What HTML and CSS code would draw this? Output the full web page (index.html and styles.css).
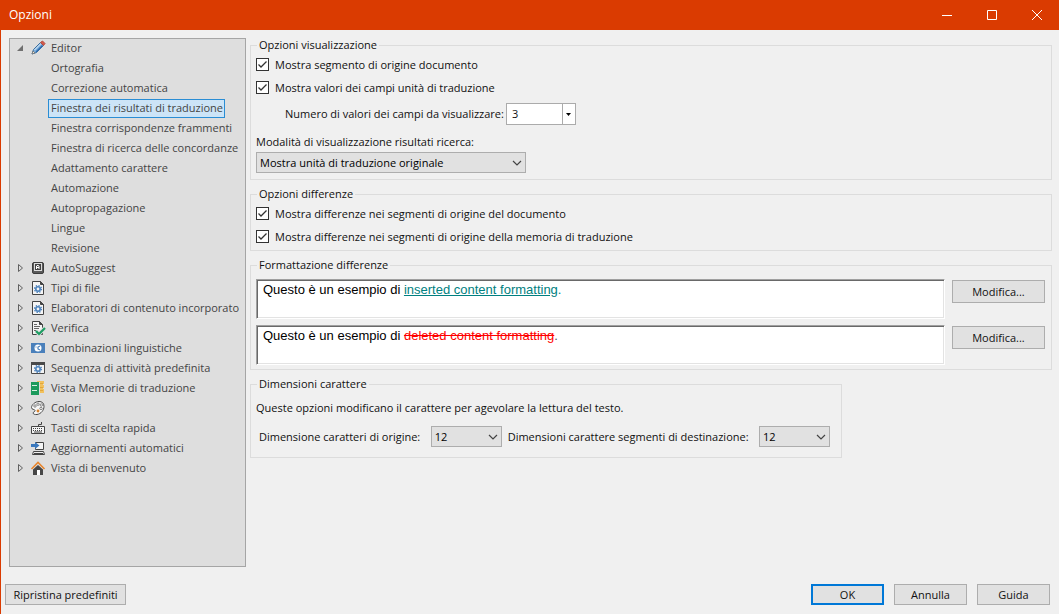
FILE: index.html
```
<!DOCTYPE html>
<html lang="it">
<head>
<meta charset="utf-8">
<title>Opzioni</title>
<link rel="stylesheet" href="styles.css">
</head>
<body>
<div class="window">
  <header class="titlebar">
    <h1 class="title">Opzioni</h1>
    <div class="window-controls">
      <button type="button" class="caption-button" aria-label="Riduci a icona"><svg width="12" height="12" viewBox="0 0 12 12"><path d="M1 6.500h10"/></svg></button>
      <button type="button" class="caption-button" aria-label="Ingrandisci"><svg width="12" height="12" viewBox="0 0 12 12"><path d="M1.500 1.500h9v9h-9z"/></svg></button>
      <button type="button" class="caption-button" aria-label="Chiudi"><svg width="12" height="12" viewBox="0 0 12 12"><path d="M1 1l10 10M11 1L1 11"/></svg></button>
    </div>
  </header>

  <div class="body">
    <nav class="tree" aria-label="Categorie">
      <ul class="tree-list">
        <li>
          <div class="node">
            <svg class="arrow" viewBox="0 0 8 8"><path fill="#707070" d="M7 1v6H1z"/></svg>
            <svg class="icon" viewBox="0 0 16 16"><path d="M2 14l1.500-4.500 7-7 3 3-7 7z" fill="#7fb0dc" stroke="#3d6f9f"/><path d="M4.500 10l6.500-6.500" stroke="#e4f1fb"/><path d="M6 12l6.500-6.500" stroke="#2f6cb0" stroke-width="1.500"/><path d="M2 14l1-3 2 2z" fill="#f0e3d2" stroke="#555" stroke-width=".5"/><path d="M10.500 2.500l2-1.500 2.500 2.500-1.500 2z" fill="#d3594b" stroke="#b34a40"/></svg>
            <a class="label" href="#editor">Editor</a>
          </div>
          <ul class="tree-list children">
            <li class="node"><a class="label" href="#ortografia">Ortografia</a></li>
            <li class="node"><a class="label" href="#correzione">Correzione automatica</a></li>
            <li class="node"><a class="label selected" aria-current="page" href="#risultati">Finestra dei risultati di traduzione</a></li>
            <li class="node"><a class="label" href="#frammenti">Finestra corrispondenze frammenti</a></li>
            <li class="node"><a class="label" href="#concordanze">Finestra di ricerca delle concordanze</a></li>
            <li class="node"><a class="label" href="#adattamento">Adattamento carattere</a></li>
            <li class="node"><a class="label" href="#automazione">Automazione</a></li>
            <li class="node"><a class="label" href="#autopropagazione">Autopropagazione</a></li>
            <li class="node"><a class="label" href="#lingue">Lingue</a></li>
            <li class="node"><a class="label" href="#revisione">Revisione</a></li>
          </ul>
        </li>
        <li class="node">
          <svg class="arrow" viewBox="0 0 8 8"><use href="#collapsed"/></svg>
          <svg class="icon" viewBox="0 0 16 16"><rect x="2.500" y="2.500" width="11" height="11" rx="1.500" fill="#5a5a5a" stroke="#3c3c3c"/><rect x="4.500" y="3.500" width="7" height="7" fill="#444" stroke="#ddd"/><path d="M6.500 9V6l.5-.5h1.500l.5.500v3M6.500 7.500H9" fill="none" stroke="#fff"/></svg>
          <a class="label" href="#autosuggest">AutoSuggest</a>
        </li>
        <li class="node">
          <svg class="arrow" viewBox="0 0 8 8"><use href="#collapsed"/></svg>
          <svg class="icon" viewBox="0 0 16 16"><use href="#file-gear"/></svg>
          <a class="label" href="#tipi">Tipi di file</a>
        </li>
        <li class="node">
          <svg class="arrow" viewBox="0 0 8 8"><use href="#collapsed"/></svg>
          <svg class="icon" viewBox="0 0 16 16"><use href="#file-gear"/></svg>
          <a class="label" href="#elaboratori">Elaboratori di contenuto incorporato</a>
        </li>
        <li class="node">
          <svg class="arrow" viewBox="0 0 8 8"><use href="#collapsed"/></svg>
          <svg class="icon" viewBox="0 0 16 16"><path d="M2.500 1.500h7l3 3v10h-10z" fill="#f4f4f4" stroke="#444"/><path d="M9.500 1.500v3h3z" fill="#444" stroke="#444"/><path d="M4 4.500h3M4 6.500h6M4 8.500h5M4 10.500h2" stroke="#666"/><path d="M6 11l3 3 6-6" fill="none" stroke="#ddd" stroke-width="4"/><path d="M6 11l3 3 6-6" fill="none" stroke="#1c9d62" stroke-width="2.200"/></svg>
          <a class="label" href="#verifica">Verifica</a>
        </li>
        <li class="node">
          <svg class="arrow" viewBox="0 0 8 8"><use href="#collapsed"/></svg>
          <svg class="icon" viewBox="0 0 16 16"><path fill="#4a80bb" d="M1 3h14v10H1z"/><circle cx="8" cy="8" r="3.500" fill="#fff"/><path d="M10 6L8 7v2l2 1" fill="none" stroke="#4a80bb" stroke-width="1.200"/><path d="M6 6.500v1" stroke="#4a80bb"/></svg>
          <a class="label" href="#combinazioni">Combinazioni linguistiche</a>
        </li>
        <li class="node">
          <svg class="arrow" viewBox="0 0 8 8"><use href="#collapsed"/></svg>
          <svg class="icon" viewBox="0 0 16 16"><path d="M1.500 2.500h13v11h-13z" fill="#f4f4f4" stroke="#4a4a4a"/><path d="M1 2h14v3H1z" fill="#4a4a4a"/><g transform="translate(8 9)"><use href="#gear"/></g></svg>
          <a class="label" href="#sequenza">Sequenza di attività predefinita</a>
        </li>
        <li class="node">
          <svg class="arrow" viewBox="0 0 8 8"><use href="#collapsed"/></svg>
          <svg class="icon" viewBox="0 0 16 16"><path fill="#f2c15c" d="M7 1h7v12H7z"/><path fill="#dedede" d="M13 4h1v1h-1zM13 8h1v1h-1z"/><path d="M10 3.500h3M10 7.500h3M10 10.500h3" stroke="#e0a63c"/><path fill="#1c9a5c" d="M1 2h8v13H1z"/><path d="M2 5.500h5M2 10.500h5" stroke="#d8f0e2"/><path d="M9.500 2v13" stroke="#ddd"/></svg>
          <a class="label" href="#memorie">Vista Memorie di traduzione</a>
        </li>
        <li class="node">
          <svg class="arrow" viewBox="0 0 8 8"><use href="#collapsed"/></svg>
          <svg class="icon" viewBox="0 0 16 16"><path d="M9 1.500c3 0 5 1.500 5 5s-3 7.500-7 8c-2 .3-4-.5-4-1.500s2-1 2-2.500-3.500-.5-3.500-3S5 1.500 9 1.500z" fill="#f6f6f6" stroke="#4a4a4a"/><g fill="#fff" stroke="#666" stroke-width=".8"><circle cx="5" cy="6" r="1.200"/><circle cx="8" cy="4.200" r="1.200"/><circle cx="11.300" cy="5" r="1.200"/><circle cx="11" cy="8.500" r="1.200"/></g><circle cx="8" cy="11" r="1.400" fill="#d9822b"/></svg>
          <a class="label" href="#colori">Colori</a>
        </li>
        <li class="node">
          <svg class="arrow" viewBox="0 0 8 8"><use href="#collapsed"/></svg>
          <svg class="icon" viewBox="0 0 16 16"><path d="M1.500 6.500h13v7h-13z" fill="#f4f4f4" stroke="#444"/><path d="M3 8.500h10M3 10.500h10" stroke="#444" stroke-dasharray="1 1"/><path d="M4 12h8" stroke="#444"/><path d="M8.500 6V4.500h3V2" fill="none" stroke="#444"/></svg>
          <a class="label" href="#tasti">Tasti di scelta rapida</a>
        </li>
        <li class="node">
          <svg class="arrow" viewBox="0 0 8 8"><use href="#collapsed"/></svg>
          <svg class="icon" viewBox="0 0 16 16"><path d="M5.500 2.500h8v7h-8z" fill="#f4f4f4" stroke="#444"/><path d="M3.500 11.500h10l1 3h-12z" fill="#eee" stroke="#444"/><path d="M4 13.500h9" stroke="#444"/><path fill="#3a78bd" d="M1 4h4V2l4.500 3.500L5 9V7H1z"/></svg>
          <a class="label" href="#aggiornamenti">Aggiornamenti automatici</a>
        </li>
        <li class="node">
          <svg class="arrow" viewBox="0 0 8 8"><use href="#collapsed"/></svg>
          <svg class="icon" viewBox="0 0 16 16"><path d="M3 9.500L8 5l5 4.500V15H3z" fill="#474747"/><path d="M7 10h3v5H7z" fill="#fff"/><path d="M1.500 9L8 2.500 14.500 9" fill="none" stroke="#e8862e" stroke-width="1.600"/></svg>
          <a class="label" href="#benvenuto">Vista di benvenuto</a>
        </li>
      </ul>
    </nav>

    <main class="settings">
      <fieldset class="group">
        <legend>Opzioni visualizzazione</legend>
        <label class="check"><input type="checkbox" checked>Mostra segmento di origine documento</label>
        <label class="check"><input type="checkbox" checked>Mostra valori dei campi unità di traduzione</label>
        <div class="count-row">
          <label for="count">Numero di valori dei campi da visualizzare:</label>
          <span class="combo">
            <input id="count" type="text" value="3">
            <button type="button" aria-label="Apri elenco"><svg width="5" height="3" viewBox="0 0 5 3"><path d="M0 0h5L2.500 3z"/></svg></button>
          </span>
        </div>
        <label class="mode-label" for="mode">Modalità di visualizzazione risultati ricerca:</label>
        <select id="mode" class="select mode-select"><option>Mostra unità di traduzione originale</option></select>
      </fieldset>

      <fieldset class="group diff-options">
        <legend>Opzioni differenze</legend>
        <label class="check"><input type="checkbox" checked>Mostra differenze nei segmenti di origine del documento</label>
        <label class="check"><input type="checkbox" checked>Mostra differenze nei segmenti di origine della memoria di traduzione</label>
      </fieldset>

      <fieldset class="group">
        <legend>Formattazione differenze</legend>
        <div class="samples">
          <p class="sample">Questo è un esempio di <ins>inserted content formatting</ins><span class="stop">.</span></p>
          <button type="button" class="button modify">Modifica...</button>
          <p class="sample">Questo è un esempio di <del>deleted content formatting</del><span class="stop">.</span></p>
          <button type="button" class="button modify">Modifica...</button>
        </div>
      </fieldset>

      <fieldset class="group sizes">
        <legend>Dimensioni carattere</legend>
        <p class="hint">Queste opzioni modificano il carattere per agevolare la lettura del testo.</p>
        <div class="size-row">
          <label for="source-size">Dimensione caratteri di origine:</label>
          <select id="source-size" class="select size-select"><option>12</option></select>
          <label for="target-size">Dimensioni carattere segmenti di destinazione:</label>
          <select id="target-size" class="select size-select"><option>12</option></select>
        </div>
      </fieldset>
    </main>
  </div>

  <footer class="footer">
    <button type="button" class="button reset">Ripristina predefiniti</button>
    <button type="button" class="button action primary">OK</button>
    <button type="button" class="button action">Annulla</button>
    <button type="button" class="button action">Guida</button>
  </footer>
</div>

<svg class="symbols" aria-hidden="true">
  <defs>
    <path id="collapsed" d="M2.500 .5v7L6.500 4z" fill="none" stroke="#606060"/>
    <g id="gear">
      <circle r="2.200" fill="none" stroke="#4a80bb" stroke-width="1.600"/>
      <circle r="3.500" fill="none" stroke="#4a80bb" stroke-width="1.200" stroke-dasharray="1.400 1.349"/>
    </g>
    <g id="file-gear">
      <path d="M2.500 1.500h8l3 3v10h-11z" fill="#f4f4f4" stroke="#444"/>
      <path d="M10.500 1.500v3h3z" fill="#444" stroke="#444"/>
      <g transform="translate(8 9)"><use href="#gear"/></g>
    </g>
  </defs>
</svg>
</body>
</html>
```
FILE: styles.css
```
* {
  box-sizing: border-box;
}

body {
  margin: 0;
  background: #f0f0f0;
  color: #111;
  font: 11px/16px "Open Sans", "Noto Sans", sans-serif;
}

button,
input,
select {
  margin: 0;
  color: inherit;
  font: inherit;
}

.window {
  display: flex;
  flex-direction: column;
  min-height: 100vh;
  border-left: 1px solid #da3b01;
}

.titlebar {
  display: flex;
  align-items: center;
  justify-content: space-between;
  height: 30px;
  padding-left: 8px;
  background: #da3b01;
  color: #fff;
}

.title {
  margin: 0;
  font-size: 12px;
  font-weight: 400;
}

.window-controls {
  display: flex;
}

.caption-button {
  display: grid;
  place-items: center;
  width: 45px;
  height: 28px;
  padding: 0;
  border: 0;
  background: none;
}

.caption-button svg {
  fill: none;
  stroke: #fff;
}

.body {
  display: flex;
  flex: 1;
  gap: 4px;
  padding: 8px 7px 0 8px;
}

.tree {
  flex: 0 0 237px;
  border: 1px solid #a5a5a5;
  background: #dedede;
  color: #444;
}

.tree-list {
  margin: 0;
  padding: 0;
  list-style: none;
}

.node {
  display: flex;
  align-items: flex-start;
  height: 20px;
  padding-left: 6px;
}

.children .node {
  padding-left: 38px;
}

.arrow {
  width: 8px;
  height: 8px;
  margin: 5px 6px 0 0;
}

.icon {
  width: 16px;
  height: 16px;
  margin: 1px 2px 0 0;
}

.label {
  padding: 0 1px 2px 2px;
  border: 1px solid transparent;
  color: inherit;
  line-height: 15px;
  text-decoration: none;
  white-space: nowrap;
}

.selected {
  border-color: #2a8dd4;
  background: #cce4f7;
}

.settings {
  display: flex;
  flex: 1;
  flex-direction: column;
  gap: 6px;
  min-width: 0;
}

.group {
  min-width: 0;
  margin: -1px 0 0;
  padding: 0 6px 6px 5px;
  border: 1px solid #dcdcdc;
}

.group + .group {
  margin-top: 0;
}

.group legend {
  height: 16px;
  margin-left: 1px;
  padding: 0 2px;
}

.check {
  display: flex;
  align-items: center;
  gap: 6px;
  height: 23px;
}

.check input {
  width: 13px;
  height: 13px;
  border: 1px solid #333;
  background: #fff url("data:image/svg+xml,%3Csvg xmlns='http://www.w3.org/2000/svg' viewBox='0 0 11 11'%3E%3Cpath d='M1.500 5.500l2.500 2.500 5.500-5.500' fill='none' stroke='%23333' stroke-width='1.300'/%3E%3C/svg%3E") center / 11px no-repeat;
  appearance: none;
}

.count-row {
  display: flex;
  align-items: center;
  gap: 2px;
  margin-top: 4px;
  padding-left: 29px;
}

.combo {
  display: flex;
  width: 70px;
  height: 22px;
  border: 1px solid #ababab;
  background: #fff;
}

.combo input {
  flex: 1;
  min-width: 0;
  padding: 0 5px;
  border: 0;
  background: none;
}

.combo button {
  display: grid;
  place-items: center;
  width: 13px;
  padding: 0;
  border: 0;
  border-left: 1px solid #ababab;
  background: none;
}

.mode-label {
  display: block;
  margin: 9px 0 2px;
}

.select {
  height: 21px;
  padding: 0 18px 0 3px;
  border: 1px solid #adadad;
  border-radius: 0;
  background: #e1e1e1 url("data:image/svg+xml,%3Csvg xmlns='http://www.w3.org/2000/svg' viewBox='0 0 10 6'%3E%3Cpath d='M1 1l4 4 4-4' fill='none' stroke='%23444' stroke-width='1.200'/%3E%3C/svg%3E") right 3px center / 10px 6px no-repeat;
  color: #000;
  appearance: none;
}

.mode-select {
  display: block;
  width: 270px;
}

.diff-options {
  padding-bottom: 2px;
}

.samples {
  display: grid;
  grid-template-columns: 1fr 93px;
  gap: 6px 7px;
  margin: 6px 0 -2px;
}

.sample {
  height: 40px;
  margin: 0;
  padding: 1px 6px;
  border: 1px solid;
  border-color: #a0a0a0 #fff #fff #a0a0a0;
  background: #fff;
  box-shadow: inset 1px 1px #696969, inset -1px -1px #e3e3e3;
  color: #000;
  font: 13px/18px "Liberation Sans", Arial, sans-serif;
}

.sample ins,
.sample ins + .stop {
  color: #008080;
}

.sample del {
  color: #f00;
}

.sample del + .stop {
  color: #555;
}

.button {
  height: 21px;
  padding: 0;
  border: 1px solid #adadad;
  background: #e1e1e1;
  text-align: center;
}

.modify {
  height: 23px;
  margin-top: 1px;
}

.sizes {
  width: 592px;
  padding-bottom: 10px;
}

.hint {
  margin: 8px 0 10px;
}

.size-row {
  display: flex;
  align-items: center;
  gap: 6px;
  padding: 0 5px 0 3px;
}

.size-select {
  width: 71px;
}

.size-row .size-select {
  margin-left: auto;
}

.footer {
  display: flex;
  gap: 10px;
  padding: 17px 9px 9px 4px;
}

.reset {
  width: 121px;
  margin-right: auto;
}

.action {
  width: 73px;
}

.primary {
  border: 2px solid #0078d7;
}

.symbols {
  position: absolute;
  width: 0;
  height: 0;
}
```
